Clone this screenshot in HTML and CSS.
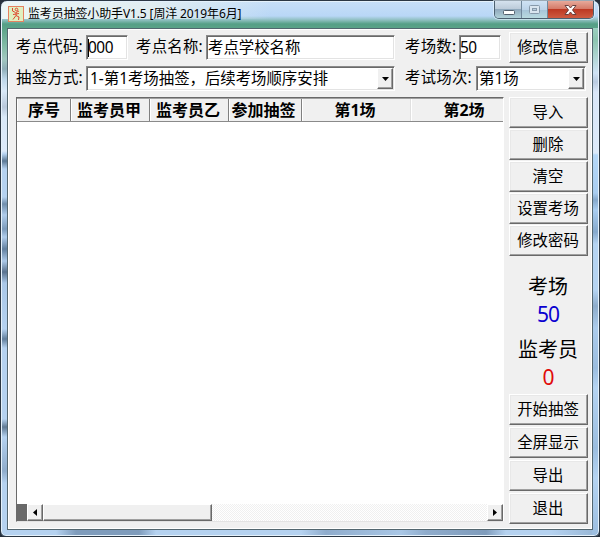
FILE: index.html
```html
<!DOCTYPE html>
<html lang="zh-CN">
<head>
<meta charset="utf-8">
<title>监考员抽签小助手V1.5</title>
<link rel="stylesheet" href="styles.css">
</head>
<body>
<div class="window">
  <header class="titlebar">
    <svg class="app-icon" width="16" height="16" viewBox="0 0 16 16"><rect x=".5" y=".5" width="15" height="15" fill="#dff0c0" stroke="#e5825f"/><g fill="none" stroke="#e0462f"><circle cx="8.500" cy="3.500" r="1.300"/><path d="M4.500 2v3l3 1.500M11 5L8 6.500v3l-3 4M8 9.500l3 1.500-.5 3M5 8.500l6-1"/></g></svg>
    <h1 class="title">监考员抽签小助手V1.5 [周洋 2019年6月]</h1>
    <div class="controls">
      <span class="ctl"><svg width="28" height="18"><rect x="8.500" y="9.500" width="11" height="4" rx="1" fill="#fff" stroke="#53606d"/></svg></span>
      <span class="ctl ctl-max"><svg width="26" height="18"><rect x="7.500" y="4.500" width="10" height="8" rx="1" fill="#d9e5ef" stroke="#8799aa"/><rect x="10.500" y="7.500" width="4" height="2" fill="#b9cddd" stroke="#8799aa"/></svg></span>
      <span class="ctl ctl-close"><svg width="46" height="18"><path d="M17 4.500h3.500l2 2.500 2-2.500H28L24.500 9l3.500 4.500h-3.500l-2-2.500-2 2.500H17L20.500 9z" fill="#fff" stroke="#69413f"/></svg></span>
    </div>
  </header>
  <main class="client">
    <div class="row row-one">
      <label class="label code-label">考点代码:</label>
      <div class="field code"><i class="caret"></i>000</div>
      <label class="label name-label">考点名称:</label>
      <div class="field name">考点学校名称</div>
      <label class="label rooms-label">考场数:</label>
      <div class="field rooms">50</div>
      <div class="btn edit">修改信息</div>
    </div>
    <div class="row row-two">
      <label class="label code-label">抽签方式:</label>
      <div class="field mode"><span>1-第1考场抽签，后续考场顺序安排</span><b class="drop"><svg width="7" height="4"><path d="M0 0h7L3.500 4z"/></svg></b></div>
      <label class="label session-label">考试场次:</label>
      <div class="field session"><span>第1场</span><b class="drop"><svg width="7" height="4"><path d="M0 0h7L3.500 4z"/></svg></b></div>
    </div>
    <div class="body">
      <section class="list">
        <div class="head">
          <span>序号</span><span>监考员甲</span><span>监考员乙</span><span>参加抽签</span><span>第1场</span><span class="last">第2场</span>
        </div>
        <div class="rows"></div>
        <div class="scroll">
          <i class="corner"></i>
          <b class="arrow"><svg width="4" height="7"><path d="M4 0v7L0 3.500z"/></svg></b>
          <b class="thumb"></b>
          <i class="track"></i>
          <b class="arrow"><svg width="4" height="7"><path d="M0 0v7l4-3.500z"/></svg></b>
        </div>
      </section>
      <aside class="side">
        <div class="btn">导入</div>
        <div class="btn">删除</div>
        <div class="btn">清空</div>
        <div class="btn">设置考场</div>
        <div class="btn">修改密码</div>
        <div class="stats">
          <div>考场</div>
          <div class="num blue">50</div>
          <div>监考员</div>
          <div class="num red">0</div>
        </div>
        <div class="btn">开始抽签</div>
        <div class="btn">全屏显示</div>
        <div class="btn">导出</div>
        <div class="btn">退出</div>
      </aside>
    </div>
  </main>
</div>
</body>
</html>
```
FILE: styles.css
```css
* { box-sizing: border-box; }
body {
  margin: 0;
  width: 600px;
  height: 537px;
  overflow: hidden;
  background: #26303c;
  font: 15.4px/20px "Noto Sans", "Noto Sans CJK SC", sans-serif;
  color: #000;
}
i, b { font-style: normal; font-weight: normal; }
svg { display: block; }
.window {
  height: 537px;
  padding: 0 6px 6px;
  border: 1px solid #2b3744;
  border-radius: 7px 7px 6px 6px;
  box-shadow: inset 0 0 0 1px #e4f1fb;
  background:
    linear-gradient(90deg, #edf6f5 0, #e0edf1 150px, rgba(210, 230, 248, 0) 270px) 0 0 / 100% 18px no-repeat,
    linear-gradient(#9ccfc0 0, #8cc5b0 12px, #a9d2cc 26px, #cfe3f5 45px, #b9cbe0 54px, #d9e7f8 64px, #dceafa 125px, #b5d8f8 127px, #a9cdf0 165px, #86a9cc 172px, #a9cdf0 182px, #86a9cc 204px, #b5d4f2 216px, #b5d4f2 262px, #8daccb 278px, #acccec 300px, #9bbddf 340px, #b5d4f2 360px, #9bbddf 420px, #b5d4f2 450px, #9bbddf 508px) 100% 27px / 7px 510px no-repeat,
    linear-gradient(90deg, #b5d2f0 0, #b5d2f0 55px, #7f9cbc 75px, #7f9cbc 138px, #b5d2f0 155px, #b5d2f0 300px, #8faccc 325px, #a9c7e6 400px, #8faccc 425px, #7f9cbc 485px, #b5d2f0 505px, #b5d2f0 550px, #9bbad9 590px) 0 100% / 100% 6px no-repeat,
    linear-gradient(#c7dff8 0, #b9d7f6 15px, #8fbfc0 19px, #559f86 23px, #5ba388 27px, #85bda8 46px, #a2c8c0 58px, #8faeb8 68px, #bdd6e8 78px, #d9e9f8 90px, #b8c8da 106px, #d9e9f8 116px, #dceafa 150px, #b5d2f0 153px, #5b7894 160px, #b5d2f0 168px, #b5d2f0 196px, #708eac 203px, #b0cdec 214px, #7c9bbb 228px, #b0cdec 236px, #62809f 248px, #acc9e8 260px, #59728e 271px, #aac8e8 282px, #b5d2f0 328px, #627f9c 338px, #b5d2f0 347px, #b5d2f0 418px, #607a94 426px, #b5d2f0 436px, #8faccb 470px, #b5d2f0 482px, #b5d2f0 537px);
}
.titlebar { display: flex; height: 27px; padding-left: 1px; }
.app-icon { margin-top: 5px; }
.title {
  margin: 3px 0 0 4px;
  font-size: 12px;
  line-height: 20px;
  font-weight: normal;
  letter-spacing: -.13px;
  white-space: nowrap;
}
.controls {
  display: flex;
  width: 100px;
  height: 18px;
  margin-right: -1px;
  margin-left: auto;
  border: 1px solid #4c6070;
  border-top: 0;
  border-radius: 0 0 5px 5px;
  overflow: hidden;
  box-shadow: 0 0 0 1px rgba(230, 245, 255, .6);
}
.ctl {
  width: 27px;
  border-right: 1px solid #71889c;
  background: linear-gradient(#d5e2ee, #bdccda 45%, #90a9bd 50%, #b1d2d8);
}
.ctl-max { width: 26px; background: linear-gradient(#cfe2f4, #bcd3e8 50%, #a6c4d8 52%, #b9dadf); }
.ctl-close { flex: 1; border: 0; background: linear-gradient(#e7a99a, #d57b69 45%, #bd3923 50%, #ce5b41); }
.client {
  display: flex;
  flex-direction: column;
  height: 502px;
  border: 1px solid #53666f;
  box-shadow: inset 0 0 0 1px #fff;
  padding: 3px 4px 0 8px;
  background: #f0f0f0;
}
.row { display: flex; align-items: flex-start; }
.row-one { height: 34px; }
.row-two { height: 31px; }
.label { flex: none; line-height: 24px; padding-top: 3px; letter-spacing: .25px; white-space: nowrap; }
.row-two .label { padding-top: 0; }
.code-label, .name-label { width: 70px; }
.rooms-label { width: 54px; }
.session-label { width: 71px; }
.field {
  display: flex;
  flex: none;
  height: 25px;
  border: 1px solid #8a8a8a;
  border-right-color: #fff;
  border-bottom-color: #fff;
  box-shadow: inset 1px 1px #696969, inset -1px -1px #e3e3e3;
  background: #fff;
  line-height: 24px;
  white-space: nowrap;
}
.row-one .field { margin-top: 3px; }
.code { width: 42px; margin-right: 8px; letter-spacing: -.45px; }
.caret { width: 1px; height: 18px; margin: 3px -1px 0 1px; background: #000; }
.name { width: 189px; margin-right: 10px; padding-left: 1px; }
.rooms { width: 42px; margin-right: 8px; letter-spacing: -.45px; }
.mode { width: 309px; margin-right: 10px; padding-left: 3px; }
.session { width: 110px; padding-left: 2px; }
.btn {
  display: flex;
  flex: none;
  align-items: center;
  justify-content: center;
  width: 79px;
  height: 31px;
  padding-right: 1px;
  border: 1px solid #fff;
  border-right-color: #696969;
  border-bottom-color: #696969;
  box-shadow: inset -1px -1px #a0a0a0, inset 1px 1px #e8e8e8;
  background: #f0f0f0;
  white-space: nowrap;
}
.edit { margin: 0; }
.drop, .arrow, .thumb {
  display: flex;
  align-items: center;
  justify-content: center;
  border: 1px solid #fff;
  border-right-color: #696969;
  border-bottom-color: #696969;
  box-shadow: inset -1px -1px #a0a0a0;
  background: #f0f0f0;
}
.drop { width: 16px; margin: 1px 1px 1px auto; }
.body { display: flex; justify-content: space-between; }
.list {
  display: flex;
  flex-direction: column;
  width: 488px;
  height: 425px;
  border: 1px solid #696969;
  border-right-color: #fff;
  border-bottom-color: #e3e3e3;
  background: #fff;
}
.head {
  display: grid;
  grid-template-columns: 54px 79px 79px 73px 109px 92px;
  height: 24px;
  border-top: 1px solid #a0a0a0;
  border-bottom: 1px solid #8a8a8a;
  background: #f0f0f0;
  font-weight: bold;
  font-size: 16px;
  line-height: 23px;
  text-align: center;
  white-space: nowrap;
  overflow: hidden;
}
.head span { padding-right: 3px; border-left: 1px solid #fff; border-right: 1px solid #808080; }
.head span:nth-child(1) { padding-right: 0; }
.head span:nth-child(4) { padding-right: 4px; }
.head span:nth-child(5) { border-right-color: #e0e0e0; }
.head .last { padding: 0 0 0 13px; border-right: 0; }
.rows { flex: 1; }
.scroll { display: flex; height: 17px; background: #f7f7f7; }
.corner { width: 10px; background: #696969; }
.arrow { width: 16px; }
.thumb { width: 169px; }
.track { flex: 1; background: repeating-conic-gradient(#fff 0 25%, #f0f0f0 0 50%) 0 0 / 2px 2px; }
.side { display: flex; flex-direction: column; gap: 1px; width: 79px; }
.stats {
  height: 136px;
  padding: 15px 1px 0 0;
  font-size: 20px;
  line-height: 30px;
  text-align: center;
}
.num { height: 33px; font-size: 21px; line-height: 25px; letter-spacing: -1px; }
.blue { color: #0a00d0; }
.red { color: #e00a0a; }
.stats ~ .btn { margin-bottom: 1px; }
```
